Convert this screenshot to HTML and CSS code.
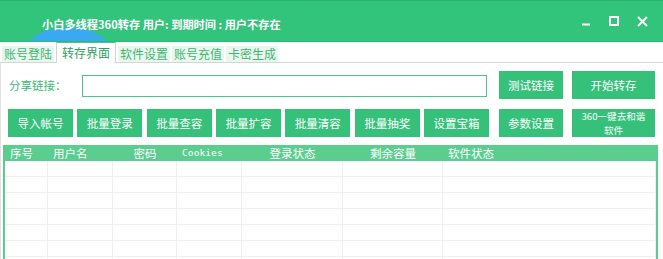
FILE: index.html
```html
<!DOCTYPE html>
<html lang="zh-CN">
<head>
    <meta charset="UTF-8">
    <title>小白多线程360转存</title>
    <link rel="stylesheet" href="styles.css">
</head>
<body>
    <div class="window">
        <div class="titlebar">
            <span class="bubble"></span>
            <span class="title">小白多线程360转存 用户: 到期时间 : 用户不存在</span>
            <div class="controls">
                <span class="ctl"><svg width="10" height="10" viewBox="0 0 10 10"><path d="M1 8.5h8" stroke="#fff" stroke-width="2"/></svg></span>
                <span class="ctl"><svg width="10" height="10" viewBox="0 0 10 10"><rect x="1" y="1" width="8" height="8" fill="none" stroke="#fff" stroke-width="2"/></svg></span>
                <span class="ctl"><svg width="11" height="11" viewBox="0 0 11 11"><path d="M1 1l9 9M10 1l-9 9" stroke="#fff" stroke-width="2"/></svg></span>
            </div>
        </div>
        <div class="tabs">
            <span class="tab">账号登陆</span>
            <span class="tab active">转存界面</span>
            <span class="tab">软件设置</span>
            <span class="tab">账号充值</span>
            <span class="tab">卡密生成</span>
        </div>
        <div class="page">
            <div class="tools">
                <div class="left">
                    <div class="share">
                        <label>分享链接：</label>
                        <input type="text">
                    </div>
                    <div class="btnrow">
                        <button>导入帐号</button>
                        <button>批量登录</button>
                        <button>批量查容</button>
                        <button>批量扩容</button>
                        <button>批量清容</button>
                        <button>批量抽奖</button>
                        <button>设置宝箱</button>
                    </div>
                </div>
                <div class="right">
                    <button>测试链接</button>
                    <button>开始转存</button>
                    <button>参数设置</button>
                    <button class="two"><span>360一键去和谐</span><span>软件</span></button>
                </div>
            </div>
            <table class="accounts">
                <colgroup>
                    <col style="width:43px"><col style="width:65px"><col style="width:64px"><col style="width:65px">
                    <col style="width:101px"><col style="width:100px"><col style="width:213px">
                </colgroup>
                <thead>
                    <tr>
                        <th>序号</th>
                        <th>用户名</th>
                        <th class="mid">密码</th>
                        <th class="latin">Cookies</th>
                        <th class="mid">登录状态</th>
                        <th class="mid">剩余容量</th>
                        <th>软件状态</th>
                    </tr>
                </thead>
                <tbody>
                    <tr><td></td><td></td><td></td><td></td><td></td><td></td><td></td></tr>
                    <tr><td></td><td></td><td></td><td></td><td></td><td></td><td></td></tr>
                    <tr><td></td><td></td><td></td><td></td><td></td><td></td><td></td></tr>
                    <tr><td></td><td></td><td></td><td></td><td></td><td></td><td></td></tr>
                    <tr><td></td><td></td><td></td><td></td><td></td><td></td><td></td></tr>
                    <tr><td></td><td></td><td></td><td></td><td></td><td></td><td></td></tr>
                    <tr><td></td><td></td><td></td><td></td><td></td><td></td><td></td></tr>
                </tbody>
            </table>
        </div>
    </div>
</body>
</html>
```

FILE: styles.css
```css
body { margin: 0; background: #fff; font-family: "Noto Sans CJK SC", "Microsoft YaHei", sans-serif; font-size: 11px; }
.window { width: 663px; height: 259px; overflow: hidden; }

.titlebar { position: relative; height: 40px; background: #33c47c; border-top: 1px solid #2cb06d; border-bottom: 1px solid #2eb872; display: flex; align-items: flex-start; overflow: hidden; }
.bubble { position: absolute; left: 5px; top: 26px; width: 126px; height: 126px; border-radius: 50%; background: #3aa9f4; }
.title { position: relative; padding: 15px 0 0 42px; line-height: 16px; color: #fff; font-weight: bold; font-size: 11.2px; white-space: nowrap; }
.controls { margin-left: auto; display: flex; height: 40px; align-items: center; padding-right: 7px; }
.ctl { width: 28px; display: flex; justify-content: center; }

.tabs { height: 20px; display: flex; align-items: flex-end; gap: 2px; padding-left: 2px; border-bottom: 1px solid #d6d6d6; font-size: 12px; }
.tab { height: 16px; line-height: 16px; padding: 0 2px; background: #eaf7ef; color: #3fb773; }
.tab.active { height: 20px; line-height: 19px; padding: 0 5px; background: #fff; color: #2f9f62; border: 1px solid #c9d9cf; border-top: 1px solid #4cc487; border-bottom: none; margin-bottom: -1px; }

.page { border-left: 1px solid #e2e2e2; }
.tools { display: flex; gap: 10px; padding: 8px 8px 0 7px; }
.left { width: 482px; }
.share { height: 28px; display: flex; align-items: center; padding-left: 1px; padding-right: 2px; }
.share label { width: 73px; color: #3cb878; font-size: 11.5px; }
.share input { flex: 1; height: 22px; box-sizing: border-box; margin-top: 2px; border: 1px solid #4cc68a; outline: none; }
.btnrow { display: flex; justify-content: space-between; margin-top: 10px; }
.btnrow button { width: 65px; }
.right { display: grid; grid-template-columns: 64px 83px; column-gap: 9px; row-gap: 10px; }

button { height: 28px; border: none; background: #36c17b; color: #fff; font-family: inherit; font-size: 11.5px; padding: 0; cursor: pointer; }
button.two { display: flex; flex-direction: column; align-items: center; justify-content: center; font-size: 9.6px; line-height: 14px; }
button.two span { display: block; height: 14px; }

.accounts { margin: 8px 0 0 2px; width: 655px; table-layout: fixed; border-collapse: separate; border-spacing: 0; border-left: 2px solid #5bcd8f; border-right: 2px solid #5bcd8f; }
.accounts th { height: 16px; padding: 0 0 0 5px; background: #5bcd8f; color: #fff; font-weight: normal; text-align: left; line-height: 16px; font-size: 11.5px; }
.accounts th.mid { text-align: center; padding: 0; }
.accounts th.latin { font-family: "DejaVu Sans Mono", monospace; font-size: 9.5px; letter-spacing: 0.1px; }
.accounts td { height: 15px; padding: 0; border-right: 1px solid #efefef; border-bottom: 1px solid #efefef; }
```
